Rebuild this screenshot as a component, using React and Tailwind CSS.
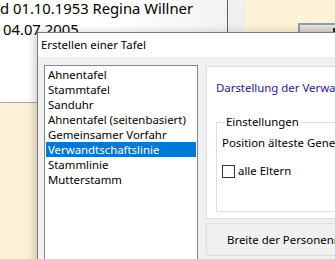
import React from 'react'

const ui = { fontFamily: '"Segoe UI", "Noto Sans", "Open Sans", sans-serif' }

const items = [
  'Ahnentafel',
  'Stammtafel',
  'Sanduhr',
  'Ahnentafel (seitenbasiert)',
  'Gemeinsamer Vorfahr',
  'Verwandtschaftslinie',
  'Stammlinie',
  'Mutterstamm',
]

export default function App() {
  return (
    <div className="relative w-[335px] h-[259px] overflow-hidden bg-[#fdf1d7]" style={ui}>
      {/* background window */}
      <div className="flex h-full">
        <div className="w-[227px] flex flex-col">
          <div className="h-[103px] bg-gradient-to-r from-white via-white to-[#f2f2f2] border-b border-[#a8a8a8]">
            <div className="text-[14.8px] leading-[21px] text-black whitespace-nowrap -mt-[2px]">d 01.10.1953 Regina Willner</div>
            <div className="text-[14.8px] leading-[21px] text-black whitespace-nowrap pl-[3px]">04.07.2005</div>
          </div>
          <div className="flex-1 bg-gradient-to-r from-[#fdf1d7] to-[#f6ebd2]" />
        </div>
        <div className="w-px bg-[#5f5f5f]" />
        <div className="w-[17px] bg-gradient-to-b from-[#f0f0f0] to-[#e4e4e4]" />
        <div className="flex-1 bg-[#fdf1d7]" />
      </div>
      <div className="absolute left-[298px] top-[23px] w-[40px] h-[20px] border-2 border-[#8d9ab3] bg-gradient-to-b from-[#e9e4dc] to-[#c9b9ae]" />
      <div className="absolute left-[333px] top-[28px] w-[3px] h-[4px] bg-[#1b2a4a]" />

      {/* dialog */}
      <div className="absolute left-[37px] top-[32px] w-[480px] h-[260px] border border-[#7c7c7c] bg-[#f0f0f0] shadow-[-3px_0_8px_rgba(0,0,0,0.18)] flex flex-col text-[11.4px]">
        <div className="h-[24px] bg-white flex items-center pl-[3px] text-black">Erstellen einer Tafel</div>
        <div className="flex pl-[6px] pt-[8px] gap-[8px]">
          <div className="w-[154px] shrink-0 h-[220px] border border-[#828790] bg-white p-px">
            {items.map((t) => (
              <div
                key={t}
                className={`h-[15px] leading-[15px] pl-[2px] whitespace-nowrap ${
                  t === 'Verwandtschaftslinie' ? 'bg-[#0078d7] text-white' : 'text-black'
                }`}
              >
                {t}
              </div>
            ))}
          </div>
          <div className="flex flex-col pt-px shrink-0">
            <div className="w-[260px] h-[153px] border border-[#dcdcdc] bg-white pl-[9px] pt-[13px]">
              <div className="leading-[16px] text-[#22179a] whitespace-nowrap">Darstellung der Verwandtschaftslinie</div>
              <fieldset className="mt-[18px] h-[98px] border border-[#dcdcdc] pl-[5px]">
                <legend className="leading-[16px] text-black px-[1px] ml-[3px]">Einstellungen</legend>
                <div className="mt-[5px] leading-[16px] text-black whitespace-nowrap">Position älteste Generation</div>
                <div className="mt-[12px] flex items-center gap-[3px] leading-[16px] text-black">
                  <span className="w-[13px] h-[13px] border border-[#333] bg-white" />
                  alle Eltern
                </div>
              </fieldset>
            </div>
            <div className="mt-[4px] w-[260px] h-[33px] border border-[#dcdcdc] bg-[#f0f0f0] flex items-center pl-[20px] text-black whitespace-nowrap">
              Breite der Personenrahmen
            </div>
          </div>
        </div>
      </div>
    </div>
  )
}
